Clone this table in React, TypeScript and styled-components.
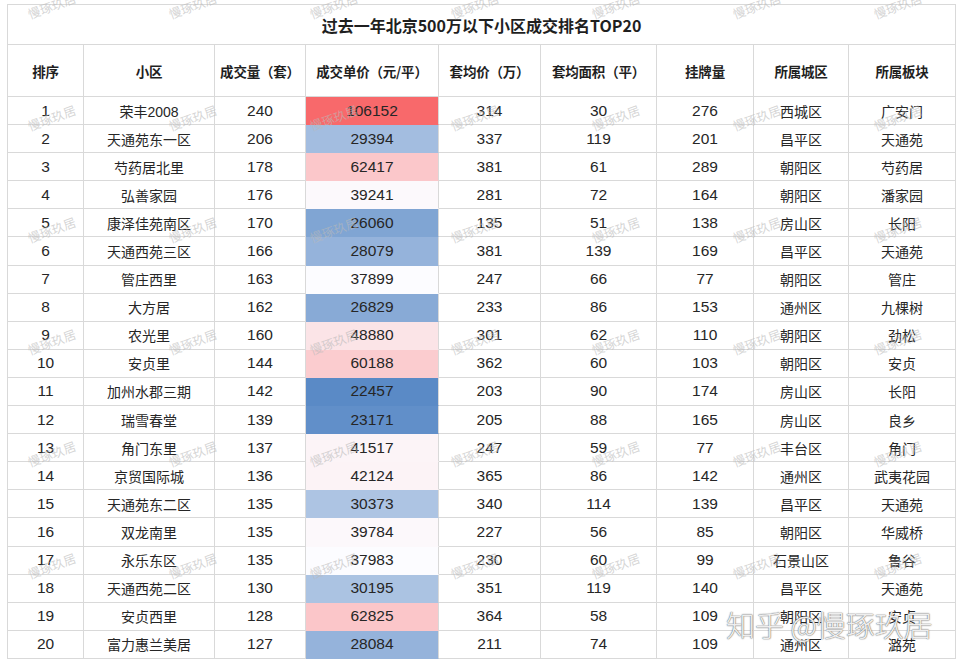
import React from "react";
import styled, { createGlobalStyle } from "styled-components";

const GlobalStyle = createGlobalStyle`
  html, body { margin: 0; padding: 0; background: #ffffff; }
  body { font-family: "Liberation Sans", "Noto Sans CJK SC", sans-serif; color: #262626; }
`;

type Row = [number, string, number, number, number, number, number, string, string];

const rows: Row[] = [
  [1, "荣丰2008", 240, 106152, 314, 30, 276, "西城区", "广安门"],
  [2, "天通苑东一区", 206, 29394, 337, 119, 201, "昌平区", "天通苑"],
  [3, "芍药居北里", 178, 62417, 381, 61, 289, "朝阳区", "芍药居"],
  [4, "弘善家园", 176, 39241, 281, 72, 164, "朝阳区", "潘家园"],
  [5, "康泽佳苑南区", 170, 26060, 135, 51, 138, "房山区", "长阳"],
  [6, "天通西苑三区", 166, 28079, 381, 139, 169, "昌平区", "天通苑"],
  [7, "管庄西里", 163, 37899, 247, 66, 77, "朝阳区", "管庄"],
  [8, "大方居", 162, 26829, 233, 86, 153, "通州区", "九棵树"],
  [9, "农光里", 160, 48880, 301, 62, 110, "朝阳区", "劲松"],
  [10, "安贞里", 144, 60188, 362, 60, 103, "朝阳区", "安贞"],
  [11, "加州水郡三期", 142, 22457, 203, 90, 174, "房山区", "长阳"],
  [12, "瑞雪春堂", 139, 23171, 205, 88, 165, "房山区", "良乡"],
  [13, "角门东里", 137, 41517, 247, 59, 77, "丰台区", "角门"],
  [14, "京贸国际城", 136, 42124, 365, 86, 142, "通州区", "武夷花园"],
  [15, "天通苑东二区", 135, 30373, 340, 114, 139, "昌平区", "天通苑"],
  [16, "双龙南里", 135, 39784, 227, 56, 85, "朝阳区", "华威桥"],
  [17, "永乐东区", 135, 37983, 230, 60, 99, "石景山区", "鲁谷"],
  [18, "天通西苑二区", 130, 30195, 351, 119, 140, "昌平区", "天通苑"],
  [19, "安贞西里", 128, 62825, 364, 58, 109, "朝阳区", "安贞"],
  [20, "富力惠兰美居", 127, 28084, 211, 74, 109, "通州区", "潞苑"],
];

const headers = ["排序", "小区", "成交量（套）", "成交单价（元/平）", "套均价（万）", "套均面积（平）", "挂牌量", "所属城区", "所属板块"];

const prices = rows.map((r) => r[3]);
const sorted = [...prices].sort((a, b) => a - b);
const minP = sorted[0];
const maxP = sorted[sorted.length - 1];
const midP = (sorted[9] + sorted[10]) / 2;

const BLUE = [90, 138, 198];
const WHITE = [252, 252, 255];
const RED = [248, 105, 107];

function mix(a: number[], b: number[], t: number) {
  const c = a.map((v, i) => Math.round(v + (b[i] - v) * t));
  return `rgb(${c[0]}, ${c[1]}, ${c[2]})`;
}

function scale(v: number) {
  if (v <= midP) return mix(BLUE, WHITE, (v - minP) / (midP - minP));
  return mix(WHITE, RED, (v - midP) / (maxP - midP));
}

const Page = styled.div`
  position: relative;
  width: 962px;
  height: 665px;
  overflow: hidden;
  padding: 4px 0 0 7px;
  box-sizing: border-box;
`;

const Table = styled.div`
  display: grid;
  width: 949px;
  box-sizing: border-box;
  grid-template-columns: 76px 131px 91px 133px 102px 116px 97px 95px 107px;
  grid-template-rows: 40px 52px repeat(20, 28.1px);
  border-top: 1px solid #d9d9d9;
  border-left: 1px solid #d9d9d9;
`;

const Title = styled.div`
  grid-column: 1 / -1;
  display: flex;
  align-items: center;
  justify-content: center;
  border-right: 1px solid #d9d9d9;
  border-bottom: 1px solid #d9d9d9;
  font-family: "Noto Sans CJK SC", sans-serif;
  font-weight: 700;
  font-size: 16px;
  color: #1f1f1f;
  padding-top: 1px;
`;

const HeadCell = styled.div`
  display: flex;
  align-items: center;
  justify-content: center;
  border-right: 1px solid #d9d9d9;
  border-bottom: 1px solid #d9d9d9;
  font-family: "Noto Sans CJK SC", sans-serif;
  font-weight: 700;
  font-size: 13.5px;
  color: #1f1f1f;
  white-space: nowrap;
  letter-spacing: -0.2px;
`;

const Cell = styled.div<{ $num?: boolean; $bg?: string }>`
  display: flex;
  align-items: center;
  justify-content: center;
  box-sizing: border-box;
  border-right: 1px solid #d9d9d9;
  border-bottom: 1px solid ${(p) => p.$bg ?? "#d9d9d9"};
  background: ${(p) => p.$bg ?? "transparent"};
  font-size: ${(p) => (p.$num ? "15.5px" : "14px")};
  color: #262626;
  white-space: nowrap;
`;

const WatermarkLayer = styled.div`
  position: absolute;
  top: -51px;
  left: -19px;
  display: grid;
  grid-template-columns: repeat(7, 141px);
  grid-template-rows: repeat(7, 112px);
  pointer-events: none;
`;

const Mark = styled.div`
  display: flex;
  align-items: center;
  justify-content: center;
  font-family: "Noto Sans CJK SC", sans-serif;
  font-size: 12.5px;
  color: rgba(185, 185, 185, 0.6);
  transform: rotate(-20deg);
  white-space: nowrap;
`;

const Signature = styled.div`
  position: absolute;
  left: 726px;
  top: 603px;
  font-family: "Noto Sans CJK SC", sans-serif;
  font-weight: 300;
  font-size: 29px;
  color: rgba(255, 255, 255, 0.9);
  text-shadow: 0 0 1px #7a7a7a, 0 0 1px #7a7a7a, 0 0 2px rgba(0, 0, 0, 0.25);
  white-space: nowrap;
  pointer-events: none;
`;

export default function App() {
  return (
    <Page>
      <GlobalStyle />
      <Table>
        <Title>过去一年北京500万以下小区成交排名TOP20</Title>
        {headers.map((h) => (
          <HeadCell key={h}>{h}</HeadCell>
        ))}
        {rows.map((r) => (
          <React.Fragment key={r[0]}>
            <Cell $num>{r[0]}</Cell>
            <Cell>{r[1]}</Cell>
            <Cell $num>{r[2]}</Cell>
            <Cell $num $bg={scale(r[3])}>{r[3]}</Cell>
            <Cell $num>{r[4]}</Cell>
            <Cell $num>{r[5]}</Cell>
            <Cell $num>{r[6]}</Cell>
            <Cell>{r[7]}</Cell>
            <Cell>{r[8]}</Cell>
          </React.Fragment>
        ))}
      </Table>
      <WatermarkLayer>
        {Array.from({ length: 49 }).map((_, i) => (
          <Mark key={i}>慢琢玖居</Mark>
        ))}
      </WatermarkLayer>
      <Signature>知乎 @慢琢玖居</Signature>
    </Page>
  );
}
